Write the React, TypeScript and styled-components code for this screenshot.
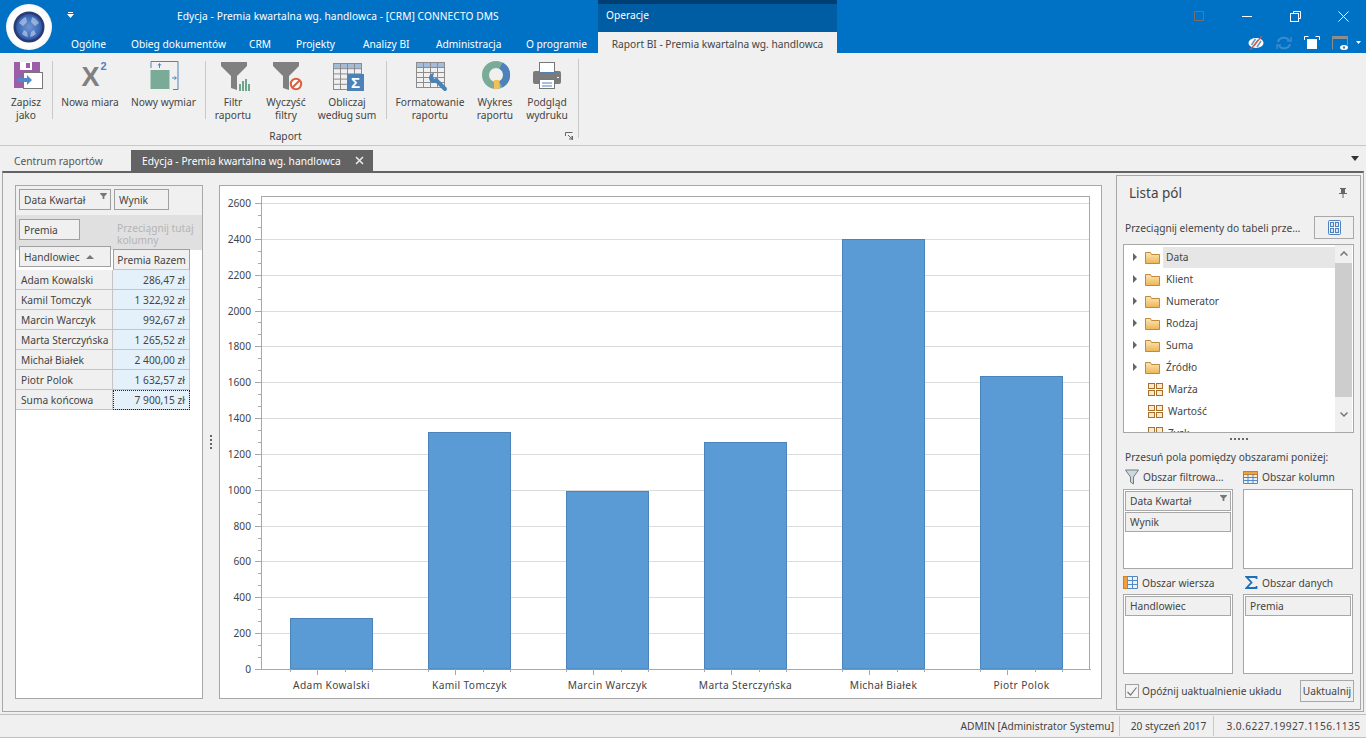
import React from 'react';
import styled, { createGlobalStyle } from 'styled-components';

const GlobalStyle = createGlobalStyle`
  html, body { margin: 0; padding: 0; background: #f0f0f0; }
  * { box-sizing: border-box; }
  #root { width: 1366px; height: 738px; overflow: hidden; }
`;

const uiFont = `'Noto Sans', 'Liberation Sans', Arial, sans-serif`;

const Page = styled.div`
  width: 1366px;
  height: 738px;
  position: relative;
  display: flex;
  flex-direction: column;
  background: #f0f0f0;
  color: #444;
  font-family: ${uiFont};
  font-size: 10.2px;
`;

/* title bar */
const TitleBar = styled.header`
  height: 53px;
  flex: none;
  background: #0072c6;
  color: #fff;
`;

const TitleRow = styled.div`
  height: 32px;
  display: flex;
`;

const TitleLeft = styled.div`
  width: 598px;
  display: flex;
  align-items: center;
  padding-left: 67px;
  white-space: nowrap;
  letter-spacing: 0.08px;
`;

const QatArrow = styled.svg`
  width: 7px;
  height: 6px;
  margin-top: -2px;
  margin-right: 103px;
  flex: none;
`;

const Category = styled.div`
  width: 239px;
  background: #005ca3;
  border-top: 4px solid #003f73;
  padding: 5px 0 0 8px;
  line-height: 13px;
`;

const WindowControls = styled.div`
  margin-left: auto;
  display: flex;
  gap: 2px;
`;

const WindowButton = styled.div`
  width: 46px;
  height: 32px;
  display: flex;
  align-items: center;
  justify-content: center;
`;

const TabRow = styled.div`
  height: 21px;
  display: flex;
  padding-left: 60px;
`;

const RibbonTab = styled.div<{ $w: number }>`
  width: ${p => p.$w}px;
  padding-left: 11px;
  line-height: 24px;
  white-space: nowrap;
`;

const ContextTab = styled.div`
  width: 239px;
  background: #f0f0f0;
  color: #444;
  text-align: center;
  line-height: 24px;
  white-space: nowrap;
`;

const ViewIcons = styled.div`
  margin-left: auto;
  display: flex;
  align-items: center;
  padding-right: 4px;
  height: 21px;
`;

const ViewIcon = styled.div<{ $w?: number }>`
  width: ${p => p.$w ?? 28}px;
  display: flex;
  justify-content: center;
`;

const LogoRing = styled.div`
  position: absolute;
  left: 6px;
  top: 4px;
  width: 46px;
  height: 46px;
  border-radius: 50%;
  background: radial-gradient(circle, #fff 60%, #e4e4e4 90%);
  display: flex;
  align-items: center;
  justify-content: center;
`;

/* ribbon */
const Ribbon = styled.section`
  height: 93px;
  flex: none;
  border-bottom: 1px solid #c8c8c8;
  display: flex;
  align-items: flex-start;
  padding-left: 3px;
`;

const RibbonPage = styled.div`
  width: 575px;
  display: flex;
  flex-direction: column;
`;

const RibbonItems = styled.div`
  height: 74px;
  display: flex;
  padding-top: 7px;
`;

const RibbonButton = styled.div<{ $w: number; $ml?: number }>`
  width: ${p => p.$w}px;
  margin-left: ${p => p.$ml ?? 0}px;
  display: flex;
  flex-direction: column;
  align-items: center;
  text-align: center;
  line-height: 13px;
  white-space: nowrap;
`;

const RibbonIcon = styled.svg`
  width: 32px;
  height: 32px;
  flex: none;
  margin-bottom: 4px;
  overflow: visible;
`;

const RibbonSeparator = styled.div<{ $h?: number; $ml: number; $mt?: number }>`
  width: 1px;
  height: ${p => p.$h ?? 58}px;
  margin-left: ${p => p.$ml}px;
  margin-top: ${p => p.$mt ?? 1}px;
  background: #c8c8c8;
  flex: none;
`;

const GroupLabel = styled.div`
  position: relative;
  height: 18px;
  line-height: 18px;
  text-align: center;
  padding-right: 10px;
`;

const Launcher = styled.svg`
  position: absolute;
  right: 5px;
  top: 5px;
  width: 8px;
  height: 8px;
`;

/* document tabs */
const DocTabs = styled.nav`
  height: 25px;
  flex: none;
  display: flex;
  align-items: flex-end;
  position: relative;
`;

const DocTab = styled.div`
  width: 131px;
  height: 21px;
  padding-left: 14px;
  line-height: 22px;
  color: #555;
`;

const DocTabActive = styled.div`
  width: 242px;
  height: 21px;
  background: #636363;
  color: #fff;
  display: flex;
  align-items: center;
  justify-content: space-between;
  padding: 0 9px 0 11px;
  white-space: nowrap;
  letter-spacing: 0.05px;
`;

const DocMenuArrow = styled.svg`
  margin-left: auto;
  margin-right: 7px;
  margin-bottom: 10px;
  width: 8px;
  height: 5px;
`;

/* main frame */
const Frame = styled.main`
  height: 541px;
  flex: none;
  margin: 0 2px;
  border: 1px solid #a8a8a8;
  border-top: 2px solid #636363;
  display: flex;
  align-items: flex-start;
`;

const Pivot = styled.div`
  width: 188px;
  height: 514px;
  margin: 12px 0 0 12px;
  flex: none;
  background: #fff;
  border: 1px solid #a8a8a8;
`;

const PivotFilters = styled.div`
  height: 29px;
  background: #f0f0f0;
  display: flex;
  gap: 3px;
  padding: 3px 0 0 3px;
`;

const PivotField = styled.div<{ $w: number }>`
  position: relative;
  width: ${p => p.$w}px;
  height: 21px;
  flex: none;
  border: 1px solid #a0a0a0;
  background: #f0f0f0;
  padding-left: 4px;
  line-height: 20px;
  white-space: nowrap;
`;

const FilterMark = styled.svg`
  position: absolute;
  right: 3px;
  top: 3px;
  width: 7px;
  height: 6px;
`;

const PivotHead = styled.div`
  background: linear-gradient(#e0e0e0 35px, #fff 35px);
  padding: 4px 0 0 3px;
`;

const PivotHeadRow = styled.div<{ $h: number }>`
  height: ${p => p.$h}px;
  display: flex;
`;

const DropHint = styled.div`
  margin-left: 37px;
  width: 84px;
  margin-top: 3px;
  line-height: 12px;
  color: #b4b4b4;
`;

const SortArrow = styled.span`
  display: inline-block;
  margin-left: 6px;
  vertical-align: 2px;
  border-left: 4px solid transparent;
  border-right: 4px solid transparent;
  border-bottom: 4px solid #777;
`;

const ColumnHead = styled.div`
  width: 77px;
  height: 21px;
  margin: 3px 0 0 2px;
  border: 1px solid #a0a0a0;
  border-bottom-color: #c4c4c4;
  background: #f0f0f0;
  text-align: center;
  line-height: 21px;
  white-space: nowrap;
`;

const PivotRow = styled.div`
  height: 20px;
  display: flex;
  line-height: 20px;
`;

const RowHead = styled.div`
  width: 97px;
  background: #f0f0f0;
  border-bottom: 1px solid #c4c4c4;
  border-right: 1px solid #c4c4c4;
  padding-left: 5px;
  white-space: nowrap;
`;

const ValueCell = styled.div<{ $focus?: boolean }>`
  width: 77px;
  background: #e4f1fa;
  border-bottom: 1px solid #c4c4c4;
  border-right: 1px solid #c4c4c4;
  padding-right: 4px;
  text-align: right;
  white-space: nowrap;
  ${p => p.$focus && 'outline: 1px dotted #222; outline-offset: -1px;'}
`;

const Splitter = styled.div`
  width: 16px;
  height: 514px;
  margin-top: 12px;
  flex: none;
  display: flex;
  flex-direction: column;
  align-items: center;
  justify-content: center;
  gap: 2px;
`;

const SplitterDot = styled.i`
  width: 2px;
  height: 2px;
  background: #666;
`;

const ChartPanel = styled.div`
  width: 883px;
  height: 514px;
  margin-top: 12px;
  flex: none;
  background: #fff;
  border: 1px solid #a8a8a8;
`;

const ChartSvg = styled.svg`
  display: block;
  width: 881px;
  height: 512px;
  font-family: ${uiFont};
  font-size: 10.2px;
  fill: #444;
`;

const CategoryLabel = styled.text`
  letter-spacing: 0.35px;
`;

/* field list */
const FieldList = styled.aside`
  width: 245px;
  height: 535px;
  margin: 2px 0 0 14px;
  flex: none;
  border: 1px solid #a8a8a8;
  padding: 0 6px;
`;

const FieldTitle = styled.div`
  height: 40px;
  display: flex;
  align-items: center;
  justify-content: space-between;
  padding: 0 7px 6px 6px;
  font-size: 13.5px;
`;

const DragRow = styled.div`
  height: 23px;
  display: flex;
  align-items: center;
  justify-content: space-between;
  padding-left: 2px;
  white-space: nowrap;
`;

const LayoutButton = styled.div`
  width: 40px;
  height: 23px;
  border: 1px solid #a8a8a8;
  display: flex;
  align-items: center;
  justify-content: center;
`;

const Tree = styled.div`
  width: 231px;
  height: 189px;
  margin-top: 5px;
  background: #fff;
  border: 1px solid #a8a8a8;
  display: flex;
`;

const TreeRows = styled.div`
  flex: 1;
  overflow: hidden;
  padding-top: 1px;
`;

const TreeRow = styled.div<{ $leaf?: boolean }>`
  height: 22px;
  display: flex;
  align-items: center;
  padding-left: ${p => (p.$leaf ? 24 : 9)}px;
`;

const TreeArrow = styled.span`
  width: 0;
  height: 0;
  border-top: 4px solid transparent;
  border-bottom: 4px solid transparent;
  border-left: 4px solid #666;
  margin-right: 8px;
`;

const TreeLabel = styled.span<{ $selected?: boolean; $leaf?: boolean }>`
  flex: 1;
  height: 21px;
  line-height: 21px;
  margin-left: ${p => (p.$leaf ? 2 : 3)}px;
  padding-left: 3px;
  background: ${p => (p.$selected ? '#e6e6e6' : 'transparent')};
`;

const ScrollBar = styled.div`
  width: 17px;
  flex: none;
  display: flex;
  flex-direction: column;
  margin-right: 1px;
  background: #f0f0f0;
`;

const ScrollArrow = styled.div<{ $grow?: number }>`
  flex: ${p => p.$grow ?? 1};
  display: flex;
  align-items: center;
  justify-content: center;
`;

const ScrollThumb = styled.div`
  height: 134px;
  background: #cdcdcd;
`;

const Grip = styled.div`
  height: 12px;
  display: flex;
  gap: 2px;
  align-items: center;
  justify-content: center;
`;

const MoveHint = styled.div`
  height: 24px;
  line-height: 24px;
  padding-left: 2px;
  white-space: nowrap;
`;

const AreaGrid = styled.div`
  display: grid;
  grid-template-columns: 110px 110px;
  column-gap: 10px;
`;

const AreaHeader = styled.div<{ $h: number; $pad: string }>`
  height: ${p => p.$h}px;
  padding: ${p => p.$pad};
  display: flex;
  align-items: center;
  gap: 4px;
  white-space: nowrap;
`;

const AreaBox = styled.div`
  height: 80px;
  background: #fff;
  border: 1px solid #a8a8a8;
  padding: 1px;
  display: flex;
  flex-direction: column;
  gap: 1px;
`;

const AreaField = styled.div`
  position: relative;
  height: 20px;
  flex: none;
  border: 1px solid #a8a8a8;
  background: #f0f0f0;
  padding-left: 4px;
  line-height: 19px;
`;

const BottomRow = styled.div`
  display: flex;
  align-items: center;
  justify-content: space-between;
  margin-top: 6px;
  padding-left: 2px;
`;

const DeferLabel = styled.label`
  display: flex;
  align-items: center;
  gap: 3px;
`;

const CheckBox = styled.span`
  width: 14px;
  height: 14px;
  border: 1px solid #a0a0a0;
  background: #f4f4f4;
  display: flex;
  align-items: center;
  justify-content: center;
`;

const UpdateButton = styled.div`
  width: 54px;
  height: 22px;
  border: 1px solid #a8a8a8;
  text-align: center;
  line-height: 20px;
`;

/* status bar */
const StatusBar = styled.footer`
  height: 24px;
  margin-top: 2px;
  flex: none;
  border-top: 1px solid #c0c0c0;
  border-bottom: 1px solid #c0c0c0;
  display: flex;
  justify-content: flex-end;
  align-items: center;
`;

const StatusCell = styled.div<{ $w?: number; $pl?: number; $ls?: number }>`
  ${p => p.$w && `width: ${p.$w}px;`}
  padding-left: ${p => p.$pl ?? 0}px;
  letter-spacing: ${p => p.$ls ?? 0}px;
  height: 20px;
  line-height: 20px;
  text-align: center;
  white-space: nowrap;
  border-left: 1px solid #c8c8c8;
  &:first-child {
    border-left: 0;
    padding-right: 5px;
  }
`;

const Folder = () => (
  <svg width="15" height="13" viewBox="0 0 15 13">
    <defs>
      <linearGradient id="fld" x1="0" y1="0" x2="0" y2="1">
        <stop offset="0" stopColor="#fbe7b8" />
        <stop offset="1" stopColor="#eeb454" />
      </linearGradient>
    </defs>
    <path d="M.5 12.5V1.5h5l1 2h8v9z" fill="url(#fld)" stroke="#c08a3c" />
  </svg>
);

const FieldGlyph = () => (
  <svg width="15" height="13" viewBox="0 0 15 13" fill="#fbeacb" stroke="#a8702c">
    <rect x=".5" y=".5" width="6" height="5" />
    <rect x="8.5" y=".5" width="6" height="5" />
    <rect x=".5" y="7.5" width="6" height="5" />
    <rect x="8.5" y="7.5" width="6" height="5" />
  </svg>
);

const GridTable = ({ x, y, w, h, cols, rows }: { x: number; y: number; w: number; h: number; cols: number; rows: number }) => {
  const cw = w / cols;
  const rh = h / rows;
  const lines: React.ReactNode[] = [];
  for (let i = 1; i < cols; i++) lines.push(<line key={`c${i}`} x1={x + i * cw} x2={x + i * cw} y1={y} y2={y + h} />);
  for (let i = 1; i < rows; i++) lines.push(<line key={`r${i}`} x1={x} x2={x + w} y1={y + i * rh} y2={y + i * rh} />);
  return (
    <g stroke="#8c8c8c" fill="none">
      <rect x={x} y={y} width={w} height={rh} fill="#a4bcd8" stroke="none" />
      <rect x={x} y={y} width={w} height={h} />
      {lines}
    </g>
  );
};

const tabs: [string, number][] = [
  ['Ogólne', 60],
  ['Obieg dokumentów', 118],
  ['CRM', 47],
  ['Projekty', 67],
  ['Analizy BI', 73],
  ['Administracja', 90],
  ['O programie', 83],
];

const report: [string, string][] = [
  ['Adam Kowalski', '286,47 zł'],
  ['Kamil Tomczyk', '1 322,92 zł'],
  ['Marcin Warczyk', '992,67 zł'],
  ['Marta Sterczyńska', '1 265,52 zł'],
  ['Michał Białek', '2 400,00 zł'],
  ['Piotr Polok', '1 632,57 zł'],
];

const bars = [286.47, 1322.92, 992.67, 1265.52, 2400, 1632.57];
const yOf = (v: number) => 669 - (v * 466) / 2600;
const snap = (n: number) => Math.round(n) + 0.5;

const Chart = () => {
  const majors = Array.from({ length: 14 }, (_, i) => i * 200);
  const minors = Array.from({ length: 39 }, (_, i) => (i * 200) / 3).filter((_, i) => i % 3 !== 0);
  const xMinors = Array.from({ length: 31 }, (_, i) => 262 + i * 27.6);
  return (
    <ChartSvg viewBox="220 186 881 512">
      {majors.slice(1).map(v => (
        <line key={v} x1={262} x2={1090} y1={snap(yOf(v))} y2={snap(yOf(v))} stroke="#dcdcdc" />
      ))}
      <rect x={261.5} y={196.5} width={828} height={473} fill="none" stroke="#a8a8a8" />
      {bars.map((v, i) => (
        <rect key={i} x={290.5 + i * 138} y={snap(yOf(v))} width={82} height={669 - snap(yOf(v))} fill="#5b9bd5" stroke="#4a84ba" />
      ))}
      {majors.map(v => (
        <g key={v}>
          <line x1={255} x2={262} y1={snap(yOf(v))} y2={snap(yOf(v))} stroke="#a8a8a8" />
          <text x={251} y={yOf(v) + 4} textAnchor="end">{v}</text>
        </g>
      ))}
      {minors.map(v => (
        <line key={v} x1={258} x2={262} y1={snap(yOf(v))} y2={snap(yOf(v))} stroke="#a8a8a8" />
      ))}
      {xMinors.map((x, i) => (
        <line key={i} x1={snap(x)} x2={snap(x)} y1={669} y2={i % 5 === 0 ? 670 : i % 5 === 2 ? 675 : 672} stroke="#a8a8a8" />
      ))}
      {report.map(([name], i) => (
        <CategoryLabel key={name} x={331.5 + i * 138} y={689} textAnchor="middle">{name}</CategoryLabel>
      ))}
    </ChartSvg>
  );
};

export default function App() {
  return (
    <Page>
      <GlobalStyle />
      <TitleBar>
        <TitleRow>
          <TitleLeft>
            <QatArrow viewBox="0 0 7 6" fill="#fff">
              <rect x="1" width="5" height="1" />
              <path d="M0 2h7L3.5 6z" />
            </QatArrow>
            Edycja - Premia kwartalna wg. handlowca - [CRM] CONNECTO DMS
          </TitleLeft>
          <Category>Operacje</Category>
          <WindowControls>
            <WindowButton>
              <svg width="10" height="10"><rect x=".5" y=".5" width="9" height="9" fill="none" stroke="#7d6f70" /></svg>
            </WindowButton>
            <WindowButton>
              <svg width="10" height="10"><rect y="5" width="10" height="1" fill="#fff" /></svg>
            </WindowButton>
            <WindowButton>
              <svg width="11" height="11" fill="none" stroke="#fff">
                <path d="M3.5 2.5v-2h7v7h-2" />
                <rect x=".5" y="2.5" width="8" height="8" />
              </svg>
            </WindowButton>
            <WindowButton>
              <svg width="11" height="11" stroke="#fff"><path d="M.5.5l10 10M10.5.5l-10 10" /></svg>
            </WindowButton>
          </WindowControls>
        </TitleRow>
        <TabRow>
          {tabs.map(([label, w]) => (
            <RibbonTab key={label} $w={w}>{label}</RibbonTab>
          ))}
          <ContextTab>Raport BI - Premia kwartalna wg. handlowca</ContextTab>
          <ViewIcons>
            <ViewIcon>
              <svg width="16" height="14" viewBox="0 0 16 14">
                <ellipse cx="8" cy="7" rx="7.5" ry="5" fill="#fff" />
                <path d="M6 10l4-6M3.500 9l4-6M9 11l4-6" stroke="#6b93c4" strokeWidth="1.500" />
                <path d="M14 0L2 14" stroke="#d8553c" strokeWidth="1.200" />
              </svg>
            </ViewIcon>
            <ViewIcon>
              <svg width="16" height="14" viewBox="0 0 16 14" fill="none" stroke="#3f8ac9" strokeWidth="2">
                <path d="M2 6a6 5 0 0 1 11-2M14 8a6 5 0 0 1-11 2" />
                <path d="M15 1v4h-4M1 13V9h4" strokeWidth="1.500" />
              </svg>
            </ViewIcon>
            <ViewIcon>
              <svg width="16" height="13" viewBox="0 0 16 13" fill="none" stroke="#fff">
                <path d="M.5 4V.5h4M11.500.5h4V4" />
                <rect x="3" y="3" width="10" height="10" fill="#fff" stroke="none" />
              </svg>
            </ViewIcon>
            <ViewIcon>
              <svg width="17" height="14" viewBox="0 0 17 14">
                <path d="M.5 13.500V.5h15v9" fill="none" stroke="#8e8e8e" />
                <rect y="0" width="16" height="3" fill="#8e8e8e" />
                <ellipse cx="12" cy="11.500" rx="4" ry="2.500" fill="#fff" />
                <circle cx="12" cy="11.500" r="1.200" fill="#777" />
              </svg>
            </ViewIcon>
            <ViewIcon $w={8}>
              <svg width="5" height="3" fill="#fff"><path d="M0 0h5L2.500 3z" /></svg>
            </ViewIcon>
          </ViewIcons>
        </TabRow>
      </TitleBar>
      <LogoRing>
        <svg width="32" height="32" viewBox="0 0 32 32">
          <defs>
            <radialGradient id="ball" cx=".5" cy=".5" r=".55">
              <stop offset="0" stopColor="#6f95d2" />
              <stop offset=".7" stopColor="#3f6dba" />
              <stop offset="1" stopColor="#2a4a94" />
            </radialGradient>
          </defs>
          <circle cx="16" cy="16" r="15.500" fill="#2c3a74" />
          <circle cx="16" cy="16" r="13" fill="url(#ball)" />
          <path d="M6 12q3-5 7-6l1 5-4 4zM26 12q-3-5-7-6l-1 5 4 4zM9 23q3 3 6 3l-1-5-3-2zM23 23q-3 3-6 3l1-5 3-2z" fill="#dfe8f6" opacity=".5" />
        </svg>
      </LogoRing>

      <Ribbon>
        <RibbonPage>
          <RibbonItems>
            <RibbonButton $w={46}>
              <RibbonIcon viewBox="0 0 32 32">
                <path d="M4 2h26v10H24v16H4z" fill="#9b5fa8" />
                <rect x="10" y="2" width="12" height="8" fill="#fff" />
                <rect x="16" y="3" width="4" height="5" fill="#9b5fa8" />
                <rect x="13.500" y="12.500" width="19" height="16" fill="#fff" stroke="#777" />
                <path d="M8 18h9v-3l5 5-5 5v-3H8z" fill="#4f8ac6" />
              </RibbonIcon>
              Zapisz<br />jako
            </RibbonButton>
            <RibbonSeparator $ml={3} />
            <RibbonButton $w={66} $ml={4}>
              <RibbonIcon viewBox="0 0 32 32">
                <text x="7.500" y="26" fontFamily="Liberation Sans, Arial, sans-serif" fontWeight="700" fontSize="27" fill="#808080">X</text>
                <text x="26.500" y="10" fontFamily="Liberation Sans, Arial, sans-serif" fontWeight="700" fontSize="11" fill="#4f81bd">2</text>
              </RibbonIcon>
              Nowa miara
            </RibbonButton>
            <RibbonButton $w={73} $ml={4}>
              <RibbonIcon viewBox="0 0 32 32">
                <path d="M3 8V1.500h27v28H25" fill="none" stroke="#4f81bd" />
                <rect x="2.500" y="10" width="19" height="19" fill="#7aab98" />
                <path d="M11.500 8V4M10 5.500L11.500 3.500l1.500 2M24 18h4M26.500 16.500l2 1.500-2 1.500" fill="none" stroke="#4f81bd" />
              </RibbonIcon>
              Nowy wymiar
            </RibbonButton>
            <RibbonSeparator $ml={5} />
            <RibbonButton $w={46} $ml={4}>
              <RibbonIcon viewBox="0 0 32 32">
                <path d="M4 2h26v4L20 16v14l-6-2V16L4 6z" fill="#808080" />
                <path d="M22 24h2v7h-2zM25 21h2v10h-2zM28 19h2v12h-2zM31 24h2v7h-2z" fill="#6fa58c" />
              </RibbonIcon>
              Filtr<br />raportu
            </RibbonButton>
            <RibbonButton $w={52} $ml={4}>
              <RibbonIcon viewBox="0 0 32 32">
                <path d="M3 2h26v4L19 16v14l-6-2V16L3 6z" fill="#808080" />
                <circle cx="26" cy="24" r="5.200" fill="#fff" stroke="#d9603e" strokeWidth="2" />
                <path d="M22.500 27.500l7-7" stroke="#d9603e" strokeWidth="2" />
              </RibbonIcon>
              Wyczyść<br />filtry
            </RibbonButton>
            <RibbonButton $w={62} $ml={4}>
              <RibbonIcon viewBox="0 0 32 32">
                <GridTable x={2.5} y={3.5} w={28} h={26} cols={4} rows={5} />
                <rect x="16" y="14" width="17" height="17" fill="#4d82b8" />
                <text x="24.500" y="28" textAnchor="middle" fontFamily="Liberation Sans, Arial, sans-serif" fontWeight="700" fontSize="15" fill="#fff">Σ</text>
              </RibbonIcon>
              Obliczaj<br />według sum
            </RibbonButton>
            <RibbonSeparator $ml={8} />
            <RibbonButton $w={76} $ml={5}>
              <RibbonIcon viewBox="0 0 32 32">
                <GridTable x={2.5} y={2.5} w={28} h={25} cols={4} rows={5} />
                <path d="M22 20l9 9" stroke="#4a82b8" strokeWidth="4" strokeLinecap="round" />
                <path d="M24 21a5 5 0 1 1-4-8l-1 4 2 3z" fill="#4a82b8" />
              </RibbonIcon>
              Formatowanie<br />raportu
            </RibbonButton>
            <RibbonButton $w={46} $ml={4}>
              <RibbonIcon viewBox="0 0 32 32">
                <circle cx="17" cy="15" r="10.500" fill="none" stroke="#7aab98" strokeWidth="7" />
                <path d="M22 5.700A10.500 10.500 0 0 1 22 24.300" fill="none" stroke="#4f81bd" strokeWidth="7" />
                <path d="M15 20h5l1 8q-3 1.500-6 1z" fill="#f0c060" />
              </RibbonIcon>
              Wykres<br />raportu
            </RibbonButton>
            <RibbonButton $w={50} $ml={4}>
              <RibbonIcon viewBox="0 0 32 32">
                <rect x="2" y="11" width="28" height="13" rx="2" fill="#7b7b7b" />
                <rect x="8.500" y="2.500" width="15" height="11" fill="#fff" stroke="#777" />
                <rect x="8" y="12" width="16" height="2" fill="#4f81bd" />
                <rect x="8.500" y="19.500" width="15" height="9" fill="#fff" stroke="#777" />
                <path d="M11 23h10M11 26h10" stroke="#4f81bd" />
                <rect x="26" y="17" width="2" height="1" fill="#fff" />
              </RibbonIcon>
              Podgląd<br />wydruku
            </RibbonButton>
          </RibbonItems>
          <GroupLabel>
            Raport
            <Launcher viewBox="0 0 8 8" fill="none" stroke="#666">
              <path d="M.5 4V.5h7M7.500 8V4M3 3l4 4M4 7h3V4" />
            </Launcher>
          </GroupLabel>
        </RibbonPage>
        <RibbonSeparator $h={79} $ml={0} $mt={6} />
      </Ribbon>

      <DocTabs>
        <DocTab>Centrum raportów</DocTab>
        <DocTabActive>
          Edycja - Premia kwartalna wg. handlowca
          <svg width="9" height="9" stroke="#e8e8e8" strokeWidth="1.600"><path d="M1 1l7 7M8 1l-7 7" /></svg>
        </DocTabActive>
        <DocMenuArrow viewBox="0 0 8 5" fill="#333"><path d="M0 0h8L4 5z" /></DocMenuArrow>
      </DocTabs>

      <Frame>
        <Pivot>
          <PivotFilters>
            <PivotField $w={92}>
              Data Kwartał
              <FilterMark viewBox="0 0 8 7" fill="#777"><path d="M0 0h8v1L5 4v3H3V4L0 1z" /></FilterMark>
            </PivotField>
            <PivotField $w={55}>Wynik</PivotField>
          </PivotFilters>
          <PivotHead>
            <PivotHeadRow $h={27}>
              <PivotField $w={61}>Premia</PivotField>
              <DropHint>Przeciągnij tutaj kolumny</DropHint>
            </PivotHeadRow>
            <PivotHeadRow $h={24}>
              <PivotField $w={92}>Handlowiec<SortArrow /></PivotField>
              <ColumnHead>Premia Razem</ColumnHead>
            </PivotHeadRow>
          </PivotHead>
          {report.map(([name, value]) => (
            <PivotRow key={name}>
              <RowHead>{name}</RowHead>
              <ValueCell>{value}</ValueCell>
            </PivotRow>
          ))}
          <PivotRow>
            <RowHead>Suma końcowa</RowHead>
            <ValueCell $focus>7 900,15 zł</ValueCell>
          </PivotRow>
        </Pivot>
        <Splitter>
          <SplitterDot /><SplitterDot /><SplitterDot /><SplitterDot />
        </Splitter>
        <ChartPanel>
          <Chart />
        </ChartPanel>
        <FieldList>
          <FieldTitle>
            Lista pól
            <svg width="8" height="10" viewBox="0 0 8 10" fill="#666">
              <path d="M1 0h6v1H6v4h2v1H4.500v4h-1V6H0V5h2V1H1z" />
            </svg>
          </FieldTitle>
          <DragRow>
            Przeciągnij elementy do tabeli prze…
            <LayoutButton>
              <svg width="13" height="15" viewBox="0 0 13 15" fill="#d8e6f4" stroke="#4f81bd">
                <rect x=".5" y=".5" width="12" height="14" rx="1" fill="none" />
                <rect x="2.500" y="2.500" width="3" height="4" />
                <rect x="7.500" y="2.500" width="3" height="4" />
                <rect x="2.500" y="8.500" width="3" height="4" />
                <rect x="7.500" y="8.500" width="3" height="4" />
              </svg>
            </LayoutButton>
          </DragRow>
          <Tree>
            <TreeRows>
              {['Data', 'Klient', 'Numerator', 'Rodzaj', 'Suma', 'Źródło'].map((name, i) => (
                <TreeRow key={name}>
                  <TreeArrow />
                  <Folder />
                  <TreeLabel $selected={i === 0}>{name}</TreeLabel>
                </TreeRow>
              ))}
              {['Marża', 'Wartość', 'Zysk'].map(name => (
                <TreeRow key={name} $leaf>
                  <FieldGlyph />
                  <TreeLabel $leaf>{name}</TreeLabel>
                </TreeRow>
              ))}
            </TreeRows>
            <ScrollBar>
              <ScrollArrow>
                <svg width="8" height="5" fill="none" stroke="#777" strokeWidth="1.500"><path d="M.5 4.500L4 1l3.500 3.500" /></svg>
              </ScrollArrow>
              <ScrollThumb />
              <ScrollArrow $grow={2}>
                <svg width="8" height="5" fill="none" stroke="#777" strokeWidth="1.500"><path d="M.5.500L4 4l3.500-3.500" /></svg>
              </ScrollArrow>
            </ScrollBar>
          </Tree>
          <Grip>
            <SplitterDot /><SplitterDot /><SplitterDot /><SplitterDot /><SplitterDot />
          </Grip>
          <MoveHint>Przesuń pola pomiędzy obszarami poniżej:</MoveHint>
          <AreaGrid>
            <div>
              <AreaHeader $h={20} $pad="0 0 4px 2px">
                <svg width="14" height="16" viewBox="0 0 14 16">
                  <path d="M.5 1h13L8.500 8v7l-3-2V8z" fill="#cfd8dc" stroke="#6d7f86" />
                </svg>
                Obszar filtrowa…
              </AreaHeader>
              <AreaBox>
                <AreaField>
                  Data Kwartał
                  <FilterMark viewBox="0 0 8 7" fill="#777"><path d="M0 0h8v1L5 4v3H3V4L0 1z" /></FilterMark>
                </AreaField>
                <AreaField>Wynik</AreaField>
              </AreaBox>
            </div>
            <div>
              <AreaHeader $h={20} $pad="0 0 4px 0">
                <svg width="15" height="13" viewBox="0 0 15 13" fill="none" stroke="#4f8ac6">
                  <rect x=".5" y=".5" width="14" height="3" fill="#f0a040" stroke="#d08020" />
                  <path d="M.5 3v9.500h14V3M5 3v9.500M10 3v9.500M.5 6.500h14M.5 9.500h14" />
                </svg>
                Obszar kolumn
              </AreaHeader>
              <AreaBox />
            </div>
            <div>
              <AreaHeader $h={25} $pad="2px 0 0 0">
                <svg width="15" height="13" viewBox="0 0 15 13" fill="none" stroke="#4f8ac6">
                  <rect x=".5" y=".5" width="4" height="12" fill="#f0a040" stroke="#d08020" />
                  <path d="M4.500.5h10v12h-10M9.500.5v12M4.500 4.500h10M4.500 8.500h10" />
                </svg>
                Obszar wiersza
              </AreaHeader>
              <AreaBox>
                <AreaField>Handlowiec</AreaField>
              </AreaBox>
            </div>
            <div>
              <AreaHeader $h={25} $pad="2px 0 0 2px">
                <svg width="13" height="13" viewBox="0 0 13 13" fill="none" stroke="#1f6fb8" strokeWidth="1.800">
                  <path d="M11.500 3V1H1.500L6.500 6.500 1.500 12h10v-2" />
                </svg>
                Obszar danych
              </AreaHeader>
              <AreaBox>
                <AreaField>Premia</AreaField>
              </AreaBox>
            </div>
          </AreaGrid>
          <BottomRow>
            <DeferLabel>
              <CheckBox>
                <svg width="10" height="9" fill="none" stroke="#777" strokeWidth="1.200"><path d="M.5 5l3 3L9.500.5" /></svg>
              </CheckBox>
              Opóźnij uaktualnienie układu
            </DeferLabel>
            <UpdateButton>Uaktualnij</UpdateButton>
          </BottomRow>
        </FieldList>
      </Frame>

      <StatusBar>
        <StatusCell>ADMIN [Administrator Systemu]</StatusCell>
        <StatusCell $w={94} $pl={4}>20 styczeń 2017</StatusCell>
        <StatusCell $w={153} $pl={7} $ls={0.4}>3.0.6227.19927.1156.1135</StatusCell>
      </StatusBar>
    </Page>
  );
}
